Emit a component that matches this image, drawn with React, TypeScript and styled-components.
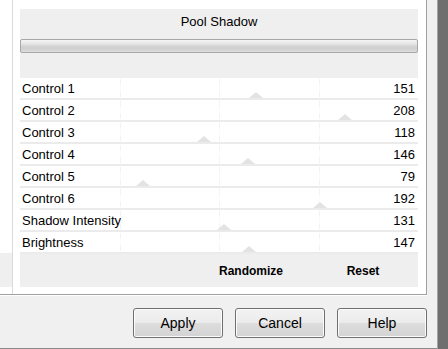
import React from "react";
import styled, { createGlobalStyle } from "styled-components";

const Global = createGlobalStyle`
  html, body { margin: 0; padding: 0; background: #f0f0f0; }
  body { font-family: "Liberation Sans", Arial, sans-serif; color: #000; }
`;

const Root = styled.div`
  display: grid;
  grid-template-columns: 437px 11px;
  width: 448px;
  height: 349px;
  overflow: hidden;
`;

const Main = styled.div`
  display: flex;
  flex-direction: column;
  background: #f0f0f0;
  border-bottom: 1px solid #8a8a8a;
`;

const Strip = styled.div`
  background: #6e6e6e;
  border-left: 1px solid #a4a4a4;
`;

const Frame = styled.div`
  display: flex;
  width: 427px;
  height: 295px;
  box-sizing: border-box;
  background: #fff;
  border-right: 1px solid #a0a0a0;
  border-bottom: 1px solid #a0a0a0;
  box-shadow: 0 1px 0 #fff;
`;

const Stub = styled.div`
  width: 12px;
  border-right: 1px solid #dadada;
  display: flex;
  flex-direction: column;
  justify-content: flex-end;
  padding-bottom: 7px;
`;

const StubFooter = styled.div`
  height: 34px;
  background: #efefef;
`;

const Panel = styled.div`
  flex: 1;
  display: flex;
  flex-direction: column;
  padding: 9px 8px 7px 7px;
`;

const Header = styled.div`
  background: #efefef;
  height: 69px;
  display: flex;
  flex-direction: column;
`;

const Title = styled.div`
  height: 26px;
  line-height: 26px;
  text-align: center;
  font-size: 13px;
`;

const Bar = styled.div`
  margin-top: 4px;
  height: 14px;
  box-sizing: border-box;
  border: 1px solid #a8a8a8;
  border-radius: 2px;
  background: linear-gradient(#f6f6f6 0%, #e6e6e6 30%, #d2d2d2 55%, #d0d0d0 75%, #dedede 100%);
`;

const Row = styled.div`
  position: relative;
  height: 22px;
  box-sizing: border-box;
  border-bottom: 2px solid #ebebeb;
  display: flex;
  align-items: center;
  justify-content: space-between;
  padding: 0 3px 0 2px;
  font-size: 13px;
`;

const Tick = styled.span<{ $at: number }>`
  position: absolute;
  top: 1px;
  bottom: 1px;
  left: ${(p) => p.$at}%;
  width: 1px;
  background: linear-gradient(#f2f2f2 0 30%, #fafafa 30% 70%, #f2f2f2 70% 100%);
`;

const Thumb = styled.span`
  position: absolute;
  bottom: 0;
  width: 0;
  height: 0;
  transform: translateX(-50%);
  border-left: 7px solid transparent;
  border-right: 7px solid transparent;
  border-bottom: 6px solid #e3e3e3;
`;

const Label = styled.span`
  position: relative;
`;

const Footer = styled.div`
  background: #efefef;
  height: 33px;
  display: flex;
  justify-content: flex-end;
  align-items: center;
  padding-right: 12px;
  gap: 14px;
`;

const LinkButton = styled.span<{ $w: number }>`
  width: ${(p) => p.$w}px;
  text-align: center;
  font-weight: bold;
  font-size: 12px;
`;

const ButtonBar = styled.div`
  display: flex;
  justify-content: flex-end;
  gap: 12px;
  padding: 13px 10px 0 0;
`;

const Button = styled.button`
  width: 90px;
  height: 30px;
  box-sizing: border-box;
  border: 1px solid #707070;
  border-radius: 3px;
  box-shadow: inset 0 0 0 1px #fbfbfb;
  background: linear-gradient(#f2f2f2 0%, #ebebeb 50%, #dddddd 51%, #d3d3d3 100%);
  font-family: "Liberation Sans", Arial, sans-serif;
  font-size: 14px;
  color: #000;
  padding: 0;
`;

const controls: [string, number][] = [
  ["Control 1", 151],
  ["Control 2", 208],
  ["Control 3", 118],
  ["Control 4", 146],
  ["Control 5", 79],
  ["Control 6", 192],
  ["Shadow Intensity", 131],
  ["Brightness", 147],
];

export default function App() {
  return (
    <>
      <Global />
      <Root>
        <Main>
          <Frame>
            <Stub>
              <StubFooter />
            </Stub>
            <Panel>
              <Header>
                <Title>Pool Shadow</Title>
                <Bar />
              </Header>
              {controls.map(([name, v]) => (
                <Row key={name}>
                  <Tick $at={25} />
                  <Tick $at={50} />
                  <Tick $at={75} />
                  <Thumb style={{ left: `${(v / 255) * 100}%` }} />
                  <Label>{name}</Label>
                  <Label>{v}</Label>
                </Row>
              ))}
              <Footer>
                <LinkButton $w={110}>Randomize</LinkButton>
                <LinkButton $w={86}>Reset</LinkButton>
              </Footer>
            </Panel>
          </Frame>
          <ButtonBar>
            <Button>Apply</Button>
            <Button>Cancel</Button>
            <Button>Help</Button>
          </ButtonBar>
        </Main>
        <Strip />
      </Root>
    </>
  );
}
